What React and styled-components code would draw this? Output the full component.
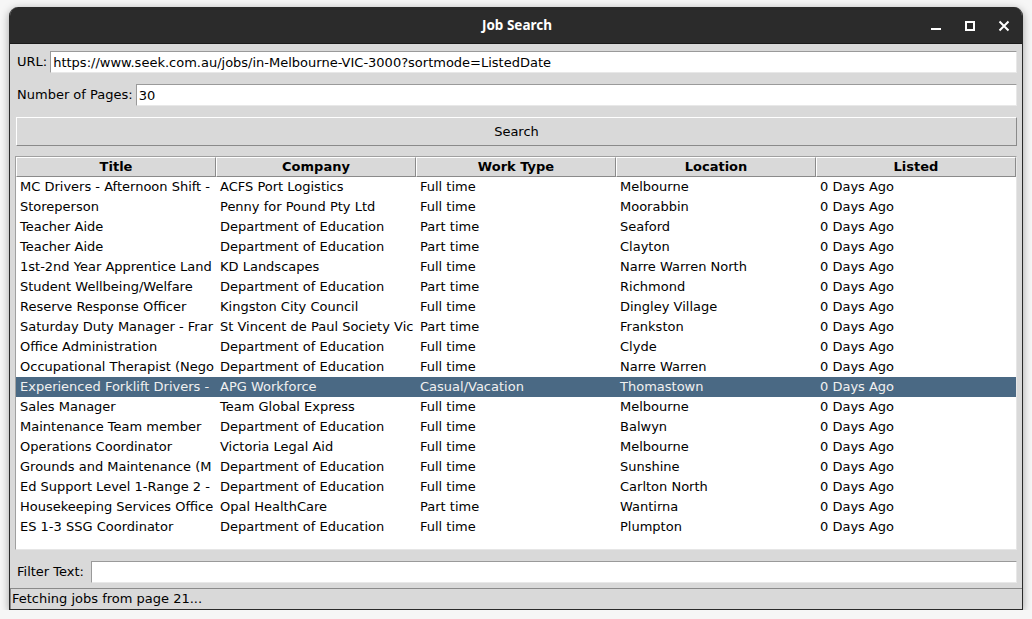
import React, { useState } from "react";
import styled, { createGlobalStyle } from "styled-components";

const jobs = [
  ["MC Drivers - Afternoon Shift -", "ACFS Port Logistics", "Full time", "Melbourne", "0 Days Ago"],
  ["Storeperson", "Penny for Pound Pty Ltd", "Full time", "Moorabbin", "0 Days Ago"],
  ["Teacher Aide", "Department of Education", "Part time", "Seaford", "0 Days Ago"],
  ["Teacher Aide", "Department of Education", "Part time", "Clayton", "0 Days Ago"],
  ["1st-2nd Year Apprentice Land", "KD Landscapes", "Full time", "Narre Warren North", "0 Days Ago"],
  ["Student Wellbeing/Welfare", "Department of Education", "Part time", "Richmond", "0 Days Ago"],
  ["Reserve Response Officer", "Kingston City Council", "Full time", "Dingley Village", "0 Days Ago"],
  ["Saturday Duty Manager - Frar", "St Vincent de Paul Society Vic", "Part time", "Frankston", "0 Days Ago"],
  ["Office Administration", "Department of Education", "Full time", "Clyde", "0 Days Ago"],
  ["Occupational Therapist (Nego", "Department of Education", "Full time", "Narre Warren", "0 Days Ago"],
  ["Experienced Forklift Drivers -", "APG Workforce", "Casual/Vacation", "Thomastown", "0 Days Ago"],
  ["Sales Manager", "Team Global Express", "Full time", "Melbourne", "0 Days Ago"],
  ["Maintenance Team member", "Department of Education", "Full time", "Balwyn", "0 Days Ago"],
  ["Operations Coordinator", "Victoria Legal Aid", "Full time", "Melbourne", "0 Days Ago"],
  ["Grounds and Maintenance (M", "Department of Education", "Full time", "Sunshine", "0 Days Ago"],
  ["Ed Support Level 1-Range 2 -", "Department of Education", "Full time", "Carlton North", "0 Days Ago"],
  ["Housekeeping Services Office", "Opal HealthCare", "Part time", "Wantirna", "0 Days Ago"],
  ["ES 1-3 SSG Coordinator", "Department of Education", "Full time", "Plumpton", "0 Days Ago"],
];

const columns = ["Title", "Company", "Work Type", "Location", "Listed"];

export default function App() {
  const [selected, setSelected] = useState(10);
  const [url, setUrl] = useState("https://www.seek.com.au/jobs/in-Melbourne-VIC-3000?sortmode=ListedDate");
  const [pages, setPages] = useState("30");
  const [filter, setFilter] = useState("");

  return (
    <>
      <Global />
      <Window>
        <TitleBar>
          <TitleText>Job Search</TitleText>
          <WinButtons>
            <WinBtn aria-label="minimize">
              <svg width="12" height="12" viewBox="0 0 12 12"><rect x="1" y="8" width="10" height="2" fill="#fff" /></svg>
            </WinBtn>
            <WinBtn aria-label="maximize">
              <svg width="12" height="12" viewBox="0 0 12 12"><rect x="2" y="2" width="8" height="8" fill="none" stroke="#fff" strokeWidth="2" /></svg>
            </WinBtn>
            <WinBtn aria-label="close">
              <svg width="12" height="12" viewBox="0 0 12 12"><path d="M1.5 1.5 L10.5 10.5 M10.5 1.5 L1.5 10.5" stroke="#fff" strokeWidth="2" /></svg>
            </WinBtn>
          </WinButtons>
        </TitleBar>
        <Body>
          <FieldRow>
            <Label>URL:</Label>
            <Entry value={url} onChange={(e) => setUrl(e.target.value)} />
          </FieldRow>
          <FieldRow>
            <Label>Number of Pages:</Label>
            <Entry value={pages} onChange={(e) => setPages(e.target.value)} />
          </FieldRow>
          <SearchButton>Search</SearchButton>
          <Tree>
            <HeaderRow>
              {columns.map((c) => (
                <HeadCell key={c}>{c}</HeadCell>
              ))}
            </HeaderRow>
            {jobs.map((job, i) => (
              <Row key={i} $selected={i === selected} onClick={() => setSelected(i)}>
                {job.map((v, j) => (
                  <Cell key={j}>{v}</Cell>
                ))}
              </Row>
            ))}
          </Tree>
          <FieldRow $gap={7}>
            <Label>Filter Text:</Label>
            <Entry value={filter} onChange={(e) => setFilter(e.target.value)} />
          </FieldRow>
        </Body>
        <StatusBar>Fetching jobs from page 21...</StatusBar>
      </Window>
    </>
  );
}

const Global = createGlobalStyle`
  html, body {
    margin: 0;
    background: #f6f6f6;
    font-family: "DejaVu Sans", "Liberation Sans", sans-serif;
    font-size: 13px;
  }
`;

const Window = styled.div`
  margin: 7px 0 0 9px;
  width: 1012px;
  height: 602px;
  box-sizing: content-box;
  display: flex;
  flex-direction: column;
  background: #d9d9d9;
  border: 1px solid #2a2a2a;
  border-top: none;
  border-radius: 9px 9px 0 0;
  box-shadow: 0 2px 9px rgba(0, 0, 0, 0.35);
  overflow: hidden;
`;

const TitleBar = styled.div`
  height: 37px;
  flex: none;
  background: #2b2b2b;
  border-bottom: 1px solid #1a1a1a;
  box-sizing: border-box;
  position: relative;
  display: flex;
  align-items: center;
  justify-content: center;
`;

const TitleText = styled.div`
  color: #ffffff;
  font-family: "Noto Sans", "DejaVu Sans", sans-serif;
  font-weight: bold;
  font-size: 13.5px;
  padding-left: 2px;
`;

const WinButtons = styled.div`
  position: absolute;
  right: 12px;
  top: 13px;
  display: flex;
  gap: 22px;
`;

const WinBtn = styled.div`
  width: 12px;
  height: 12px;
  display: flex;
`;

const Body = styled.div`
  flex: none;
  display: flex;
  flex-direction: column;
  gap: 11px;
  padding: 7px 5px 0 6px;
`;

const FieldRow = styled.div`
  display: flex;
  align-items: center;
  gap: ${(p) => p.$gap || 3}px;
  height: 22px;
`;

const Label = styled.label`
  padding-left: 1px;
  line-height: 16px;
  color: #000;
  white-space: nowrap;
`;

const Entry = styled.input`
  flex: 1;
  height: 22px;
  box-sizing: border-box;
  margin: 0;
  padding: 0 2px;
  font: inherit;
  color: #000;
  background: #ffffff;
  border: 1px solid;
  border-color: #9a9a9a #e8e8e8 #e8e8e8 #9a9a9a;
  outline: none;
`;

const SearchButton = styled.button`
  height: 29px;
  margin: 0 0 -1px 0;
  padding: 0;
  font: inherit;
  color: #000;
  background: #d9d9d9;
  border: 1px solid;
  border-color: #ffffff #8a8a8a #8a8a8a #ffffff;
  box-sizing: border-box;
  cursor: pointer;
`;

const Tree = styled.div`
  height: 394px;
  margin-left: -1px;
  box-sizing: border-box;
  background: #ffffff;
  border: 1px solid;
  border-color: #a0a0a0 #e6e6e6 #e6e6e6 #a0a0a0;
  overflow: hidden;
`;

const HeaderRow = styled.div`
  display: grid;
  grid-template-columns: repeat(5, 200px);
  height: 20px;
`;

const HeadCell = styled.div`
  box-sizing: border-box;
  background: #d9d9d9;
  border: 1px solid;
  border-color: #ffffff #8a8a8a #8a8a8a #ffffff;
  font-weight: bold;
  text-align: center;
  line-height: 18px;
  color: #000;
  overflow: hidden;
  white-space: nowrap;
`;

const Row = styled.div`
  display: grid;
  grid-template-columns: repeat(5, 200px);
  height: 20px;
  background: ${(p) => (p.$selected ? "#4a6984" : "#ffffff")};
  color: ${(p) => (p.$selected ? "#f0f0f0" : "#000000")};
`;

const Cell = styled.div`
  padding-left: 4px;
  line-height: 20px;
  overflow: hidden;
  white-space: nowrap;
`;

const StatusBar = styled.div`
  height: 21px;
  margin-top: 5px;
  flex: none;
  box-sizing: border-box;
  padding-left: 1px;
  line-height: 19px;
  border-top: 1px solid #8a8a8a;
  border-left: 1px solid #8a8a8a;
  color: #000;
`;
